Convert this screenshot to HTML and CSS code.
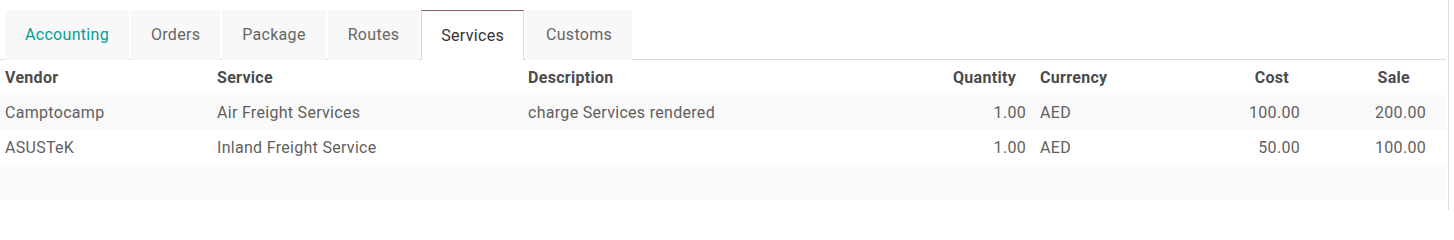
FILE: index.html
```html
<!DOCTYPE html>
<html>
<head>
<meta charset="utf-8">
<link rel="stylesheet" href="styles.css">
</head>
<body>
<div class="page">
  <div class="content">
    <ul class="tabs">
      <li class="tab tab-accent">Accounting</li>
      <li class="tab">Orders</li>
      <li class="tab">Package</li>
      <li class="tab">Routes</li>
      <li class="tab tab-active">Services</li>
      <li class="tab">Customs</li>
    </ul>
    <table class="list">
      <colgroup>
        <col class="c-vendor">
        <col class="c-service">
        <col class="c-desc">
        <col class="c-qty">
        <col class="c-cur">
        <col class="c-cost">
        <col class="c-sale">
        <col class="c-end">
      </colgroup>
      <thead>
        <tr>
          <th>Vendor</th>
          <th>Service</th>
          <th>Description</th>
          <th class="num h-qty">Quantity</th>
          <th>Currency</th>
          <th class="num h-cost">Cost</th>
          <th class="num h-sale">Sale</th>
          <th></th>
        </tr>
      </thead>
      <tbody>
        <tr class="striped">
          <td>Camptocamp</td>
          <td>Air Freight Services</td>
          <td>charge Services rendered</td>
          <td class="num d-qty">1.00</td>
          <td>AED</td>
          <td class="num">100.00</td>
          <td class="num">200.00</td>
          <td></td>
        </tr>
        <tr>
          <td>ASUSTeK</td>
          <td>Inland Freight Service</td>
          <td></td>
          <td class="num d-qty">1.00</td>
          <td>AED</td>
          <td class="num">50.00</td>
          <td class="num">100.00</td>
          <td></td>
        </tr>
        <tr class="striped empty">
          <td colspan="8"></td>
        </tr>
      </tbody>
    </table>
  </div>
  <div class="edge"></div>
</div>
</body>
</html>
```

FILE: styles.css
```css
* { box-sizing: border-box; }
html, body { margin: 0; padding: 0; background: #fff; }
body {
  font-family: Roboto, "Liberation Sans", sans-serif;
  font-size: 16px;
  letter-spacing: 0.3px;
  color: #5f5f5f;
}
.page {
  display: flex;
  height: 210px;
}
.content {
  width: 1446px;
}
.edge {
  margin-left: 2px;
  width: 1px;
  background: #dcdcdc;
}
.tabs {
  list-style: none;
  margin: 0;
  padding: 10px 0 0 5px;
  display: flex;
  gap: 2px;
  border-bottom: 1px solid #d9d9d9;
  height: 60px;
}
.tab {
  height: 50px;
  margin-bottom: -1px;
  padding: 0 19px;
  line-height: 47px;
  background: #f8f8f8;
  color: #666;
  border: 1px solid transparent;
  border-bottom: none;
}
.tab-accent { color: #00a09d; }
.tab-active {
  background: #fff;
  color: #333;
  border-color: #d9d9d9;
  border-top-color: #875a7b;
  padding: 1px 19px 0;
}
.list {
  width: 1446px;
  border-collapse: collapse;
  table-layout: fixed;
}
.c-vendor { width: 212px; }
.c-service { width: 311px; }
.c-desc { width: 412px; }
.c-qty { width: 100px; }
.c-cur { width: 170px; }
.c-cost { width: 100px; }
.c-sale { width: 126px; }
.c-end { width: 15px; }
.list th, .list td {
  height: 35px;
  padding: 0 5px;
  text-align: left;
  white-space: nowrap;
  vertical-align: middle;
}
.list th {
  font-weight: 700;
  color: #4c4c4c;
  position: relative;
  z-index: 1;
  box-shadow: 0 2px 3px -1px rgba(0, 0, 0, 0.07);
  background: #fff;
}
.list .num { text-align: right; }
.list .h-qty { padding-right: 19px; }
.list .h-cost { padding-right: 16px; }
.list .h-sale { padding-right: 21px; }
.list .d-qty { padding-right: 9px; }
.striped td { background: #f9f9f9; }
```
